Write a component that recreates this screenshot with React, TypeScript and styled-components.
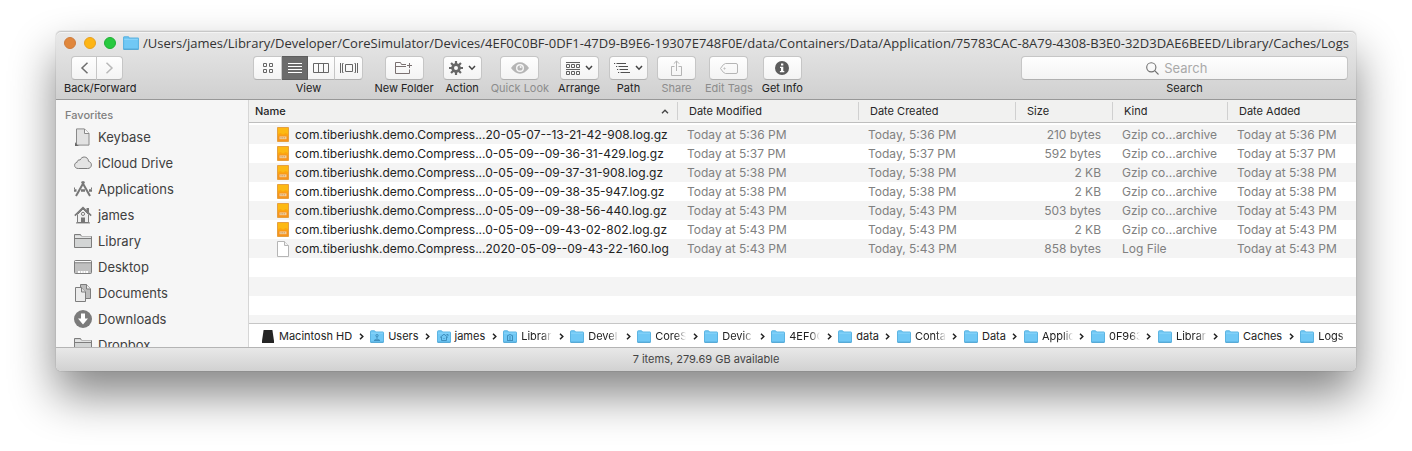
import React from "react";
import styled, { createGlobalStyle, css } from "styled-components";

const GlobalStyle = createGlobalStyle`
  *, *::before, *::after { box-sizing: border-box; }
  body { margin: 0; background: #fff; font-family: Inter, "Liberation Sans", sans-serif; font-size: 12px; color: #262626; }
  button, input { font: inherit; color: inherit; }
  svg { display: block; flex: none; }
`;

const Desktop = styled.div`
  display: flex;
  flex-direction: column;
  height: 100vh;
  padding: 31px 56px 80px;
  overflow: hidden;
`;

const Window = styled.main`
  display: flex;
  flex-direction: column;
  flex: 1;
  min-height: 0;
  border-radius: 5px;
  background: #fff;
  box-shadow: 0 0 1px rgba(0, 0, 0, 0.5), 0 24px 46px rgba(0, 0, 0, 0.48);
`;

const Chrome = styled.header`
  flex: none;
  border-radius: 5px 5px 0 0;
  border-bottom: 1px solid #989898;
  background: linear-gradient(#e9e9e9, #d0d0d0);
  box-shadow: inset 0 1px 0 #c8c8c8, inset 0 2px 0 #f4f4f4;
`;

const TitleBar = styled.div`
  display: flex;
  align-items: center;
  height: 24px;
  padding: 0 8px;
`;

const Lights = styled.div`
  display: flex;
  gap: 8px;
  margin-right: 7px;
`;

const Light = styled.button<{ $fill: string; $edge: string }>`
  width: 12px;
  height: 12px;
  padding: 0;
  border: 1px solid ${(p) => p.$edge};
  border-radius: 50%;
  background: ${(p) => p.$fill};
`;

const Title = styled.h1`
  margin: 0 0 0 4px;
  font: 400 13px/24px "Open Sans", Inter, sans-serif;
  color: #333;
  white-space: nowrap;
`;

const Toolbar = styled.div`
  display: flex;
  align-items: flex-start;
  gap: 9px;
  padding: 1px 8px 3px;
`;

const ToolItem = styled.div<{ $dim?: boolean }>`
  display: flex;
  flex-direction: column;
  align-items: center;
  flex: none;
  color: ${(p) => (p.$dim ? "#8c8c8c" : "#222")};
`;

const ToolLabel = styled.span`
  font-size: 11px;
  line-height: 16px;
  white-space: nowrap;
`;

const Segments = styled.div`
  display: flex;
`;

const NavItem = styled(ToolItem)`
  margin-right: 108px;
  ${Segments} { margin-right: 6px; }
`;

const ViewItem = styled(ToolItem)`
  margin-right: 2px;
`;

const face = css`
  border: 1px solid #c6c6c6;
  border-bottom-color: #b0b0b0;
  background: linear-gradient(#fefefe, #f3f3f3);
`;

const ToolButton = styled.button`
  ${face}
  display: flex;
  align-items: center;
  justify-content: center;
  gap: 5px;
  width: 39px;
  height: 24px;
  padding: 0;
  border-radius: 4px;
  color: inherit;
`;

const Segment = styled.button<{ $width: number; $active?: boolean }>`
  ${face}
  display: flex;
  align-items: center;
  justify-content: center;
  width: ${(p) => p.$width}px;
  height: 24px;
  padding: 0;
  &:not(:first-child) { border-left: 0; }
  &:first-child { border-radius: 4px 0 0 4px; }
  &:last-child { border-radius: 0 4px 4px 0; }
  ${(p) => p.$active && css`
    background: #6b6b6b;
    border-color: #5d5d5d;
  `}
`;

const SearchItem = styled(ToolItem)`
  flex: 0 1 327px;
  min-width: 120px;
  align-items: stretch;
  margin-left: auto;
  text-align: center;
`;

const SearchBox = styled.div`
  ${face}
  display: flex;
  align-items: center;
  gap: 5px;
  height: 24px;
  padding-left: 38%;
  border-radius: 4px;
`;

const SearchInput = styled.input`
  flex: 1;
  min-width: 0;
  height: 20px;
  padding: 0;
  border: 0;
  outline: 0;
  background: none;
  font-size: 13px;
  &::placeholder { color: #a9a9a9; opacity: 1; }
`;

const SearchLabel = styled.label`
  font-size: 11px;
  line-height: 16px;
`;

const Body = styled.div`
  display: flex;
  flex: 1;
  min-height: 0;
`;

const Sidebar = styled.nav`
  flex: 0 0 193px;
  overflow: hidden;
  padding: 8px 0 0 9px;
  border-right: 1px solid #d6d6d6;
  background: #f6f6f6;
`;

const SidebarHeading = styled.h2`
  margin: 0 0 2px;
  font-size: 11px;
  font-weight: 500;
  line-height: 14px;
  color: #808080;
`;

const SidebarList = styled.ul`
  margin: 0;
  padding: 0 0 0 9px;
  list-style: none;
`;

const SidebarLink = styled.a`
  display: flex;
  align-items: center;
  gap: 6px;
  height: 26px;
  font-size: 13px;
  color: #404040;
  text-decoration: none;
`;

const Content = styled.section`
  display: flex;
  flex-direction: column;
  flex: 1;
  min-width: 0;
`;

const ListPane = styled.div`
  flex: 1;
  min-height: 0;
  overflow: hidden;
  background: repeating-linear-gradient(#f4f4f4 0 19px, #fff 19px 38px) 0 25px no-repeat #fff;
`;

const FileTable = styled.table`
  width: 100%;
  table-layout: fixed;
  border-spacing: 0;
  tbody::before { content: ""; display: block; height: 2px; }
`;

const Col = styled.col<{ $width?: number }>`
  width: ${(p) => (p.$width ? `${p.$width}px` : "auto")};
`;

const HeadCell = styled.th<{ $primary?: boolean }>`
  height: 23px;
  padding: 0;
  border-bottom: 1px solid #bebebe;
  background: #f1f1f0;
  font-size: 11px;
  font-weight: ${(p) => (p.$primary ? 500 : 400)};
  text-align: left;
`;

const HeadInner = styled.div<{ $first?: boolean; $last?: boolean }>`
  display: flex;
  align-items: center;
  justify-content: space-between;
  height: 18px;
  padding: 0 8px 0 ${(p) => (p.$first ? 6 : 11)}px;
  border-right: ${(p) => (p.$last ? 0 : 1)}px solid #d0d0d0;
  white-space: nowrap;
`;

const Cell = styled.td<{ $right?: boolean }>`
  height: 19px;
  padding: 0 12px 0 9px;
  color: #808080;
  line-height: 19px;
  text-align: ${(p) => (p.$right ? "right" : "left")};
  white-space: nowrap;
`;

const NameCell = styled(Cell)`
  padding: 0 0 0 28px;
  color: #222;
`;

const FileName = styled.div`
  display: flex;
  align-items: center;
  gap: 6px;
`;

const PathBar = styled.nav`
  display: flex;
  align-items: center;
  flex: none;
  height: 24px;
  padding: 1px 13px 0;
  border-top: 1px solid #c6c6c6;
  overflow: hidden;
`;

const Crumb = styled.a`
  display: flex;
  align-items: center;
  gap: 4px;
  flex: none;
  font-size: 11px;
  color: #222;
  text-decoration: none;
`;

const CrumbText = styled.span<{ $clipped?: boolean }>`
  line-height: 16px;
  white-space: nowrap;
  ${(p) => p.$clipped && css`
    width: 31px;
    overflow: hidden;
    mask-image: linear-gradient(90deg, #000 68%, transparent);
  `}
`;

const CrumbGap = styled.span`
  display: flex;
  flex: none;
  justify-content: center;
  width: 18px;
`;

const StatusBar = styled.footer`
  flex: none;
  height: 24px;
  border-top: 1px solid #b4b4b4;
  border-radius: 0 0 5px 5px;
  background: linear-gradient(#e8e8e8, #d1d1d1);
  font-size: 11px;
  line-height: 23px;
  text-align: center;
  color: #444;
`;

const Folder = ({ w = 14, mark }: { w?: number; mark?: string }) => (
  <svg width={w} height={w === 14 ? 13 : 14} viewBox="0 0 14 13" preserveAspectRatio="none">
    <path d="M.5 12V1.5Q.5.8 1.2.8H4.6L5.6 2H13Q13.5 2 13.5 2.6V12Z" fill="#70c8f5" stroke="#5cb4e2" />
    <path d="M1 3.2H13" stroke="#89d4fa" />
    <path d="M.5 12.4H13.5" stroke="#4fa5d3" />
    {mark && <path d={mark} fill="none" stroke="#3f8fbd" />}
  </svg>
);

const Caret = () => (
  <svg width="8" height="6" viewBox="0 0 8 6"><path d="M1 1L4 4.2L7 1" fill="none" stroke="#444" strokeWidth="1.5" /></svg>
);

const line = { fill: "none", stroke: "#7d7d7d", strokeWidth: 1 } as const;

const FolderGray = () => (
  <svg width="18" height="18" viewBox="0 0 18 18">
    <path d="M.5 15.5V2.5H6.5L7.5 4.5H17.5V15.5Z" fill="#d3d5d5" stroke="#7d7d7d" />
    <path d="M1 5H17" stroke="#f2f2f2" /><path d="M1 6.5H17" stroke="#7d7d7d" />
  </svg>
);

const sideIcons: Record<string, React.ReactNode> = {
  file: (
    <svg width="18" height="18" viewBox="0 0 18 18">
      <path d="M2.5 .9H10.5L15 5.5V17.1H2.5Z" fill="#e2e2e2" stroke="#8a8a8a" />
      <path d="M10.5 1V5.5H15" fill="#fafafa" stroke="#8a8a8a" />
      <path d="M1 14V18H5.5C3.5 17.4 2.2 16.2 1 14Z" fill="#666" />
    </svg>
  ),
  cloud: (
    <svg width="18" height="18" viewBox="0 0 18 18">
      <path d="M4.3 14.5C2 14.5.6 13.2.6 11.3C.6 9.6 1.7 8.5 3.1 8.3C3.1 6.6 4.6 5.5 6.1 6C7 4 8.5 3 10.2 3C12.6 3 14.4 4.8 14.5 7.3C16.3 7.8 17.4 9.1 17.4 10.9C17.4 13 15.8 14.5 13.7 14.5Z" fill="#e4e4e4" stroke="#7d7d7d" />
    </svg>
  ),
  apps: (
    <svg width="18" height="18" viewBox="0 0 18 18" fill="none" stroke="#777">
      <path d="M10.2 1.5L2 16" strokeWidth="2" /><path d="M7.8 1.5L16 16" strokeWidth="2" />
      <path d="M0 10.5H2.5M7 10.5H11M15 10.5H18" strokeWidth="2.4" />
      <path d="M.5 7.5V9M17.5 7.5V9" />
    </svg>
  ),
  home: (
    <svg width="18" height="18" viewBox="0 0 18 18">
      <path d="M12.5 2H15V6H12.5Z" fill="#777" />
      <path d="M3.5 8.5L9 3L14.5 8.5V16.5H3.5Z" fill="#efefef" stroke="#7d7d7d" />
      <path d="M.8 9.6L9 1.6L17.2 9.6" fill="none" stroke="#777" strokeWidth="1.5" />
      <path d="M7 11.5H11V17H7Z" fill="#777" /><circle cx="9" cy="7.9" r="1.6" {...line} /><path d="M2 16.9H16" stroke="#777" />
    </svg>
  ),
  folder: <FolderGray />,
  desktop: (
    <svg width="18" height="18" viewBox="0 0 18 18">
      <rect x=".5" y="2.5" width="17" height="13" rx="1" fill="#c0c0c0" stroke="#7d7d7d" />
      <path d="M1 3.5H17" stroke="#fafafa" /><path d="M1 4.8H17" stroke="#8c8c8c" />
      <path d="M4 14H14" stroke="#fff" strokeWidth="2" strokeDasharray="2 .7" />
    </svg>
  ),
  documents: (
    <svg width="18" height="18" viewBox="0 0 18 18">
      <path d="M6.5.5H12.5L16.5 5V14.5H6.5Z" fill="#bcbcbc" stroke="#7d7d7d" />
      <path d="M12.5.5V5H16.5" fill="#eee" stroke="#7d7d7d" />
      <path d="M1.5 3.5H7.5L11.5 8V17.5H1.5Z" fill="#ececec" stroke="#7d7d7d" />
      <path d="M7.5 3.5V8H11.5" fill="#ddd" stroke="#7d7d7d" />
    </svg>
  ),
  downloads: (
    <svg width="18" height="18" viewBox="0 0 18 18">
      <circle cx="9" cy="9" r="9" fill="#7b7b7b" />
      <path d="M7 3.5H11V8.5H14L9 14.6L4 8.5H7Z" fill="#fff" />
    </svg>
  ),
};

const places = [
  ["Keybase", "file"], ["iCloud Drive", "cloud"], ["Applications", "apps"], ["james", "home"], ["Library", "folder"],
  ["Desktop", "desktop"], ["Documents", "documents"], ["Downloads", "downloads"], ["Dropbox", "folder"],
];

const prefix = "com.tiberiushk.demo.Compress...";
const files = [
  ["20-05-07--13-21-42-908.log.gz", "5:36 PM", "210 bytes"],
  ["0-05-09--09-36-31-429.log.gz", "5:37 PM", "592 bytes"],
  ["0-05-09--09-37-31-908.log.gz", "5:38 PM", "2 KB"],
  ["0-05-09--09-38-35-947.log.gz", "5:38 PM", "2 KB"],
  ["0-05-09--09-38-56-440.log.gz", "5:43 PM", "503 bytes"],
  ["0-05-09--09-43-02-802.log.gz", "5:43 PM", "2 KB"],
  ["2020-05-09--09-43-22-160.log", "5:43 PM", "858 bytes"],
];

const GzIcon = () => (
  <svg width="12" height="15" viewBox="0 0 12 15">
    <path d="M.5.5H11.5V14.5H.5Z" fill="#fca510" stroke="#e6a040" />
    <path d="M1 1H11V7L8.5 6L6 7.5L3.5 6L1 7Z" fill="#fdb913" />
    <path d="M1 9.5L3 8.5H9L11 9.5V14H1Z" fill="#f7941d" />
    <path d="M2.5 10.8H9.5" stroke="#f3cd96" strokeWidth="2.8" /><path d="M3.5 10.8H8.5" stroke="#c4955c" strokeDasharray="1 .7" />
  </svg>
);

const PageIcon = () => (
  <svg width="12" height="16" viewBox="0 0 12 16">
    <path d="M.5.5H7.5L11.5 4.5V15.5H.5Z" fill="#fff" stroke="#b5b5b5" />
    <path d="M7.5.5V4.5H11.5" fill="#f1f1f1" stroke="#b5b5b5" />
  </svg>
);

const person = "M7 4.5A1.1 1.1 0 1 1 7 6.8A1.1 1.1 0 1 1 7 4.5M7 7V8.5M4 10.5Q7 7.5 10 10.5Z";
const house = "M3 7.5L7 4.2L11 7.5M4.5 7V10.5H9.5V7M9.5 4.5H11V6M6.5 8.5H7.5";
const columns = "M4 6L7 4.5L10 6M4.5 6V10.5M7 6V10.5M9.5 6V10.5M4 10.5H10";

const crumbs: { text: string; clipped?: boolean; mark?: string }[] = [
  { text: "Users", mark: person }, { text: "james", mark: house }, { text: "Librar", clipped: true, mark: columns },
  { text: "Devel", clipped: true }, { text: "CoreS", clipped: true }, { text: "Devic", clipped: true },
  { text: "4EF0C", clipped: true }, { text: "data" }, { text: "Conta", clipped: true }, { text: "Data" },
  { text: "Applic", clipped: true }, { text: "0F963", clipped: true }, { text: "Librar", clipped: true },
  { text: "Caches" }, { text: "Logs", clipped: true },
];

const Arrow = ({ d, color }: { d: string; color: string }) => (
  <svg width="9" height="12" viewBox="0 0 9 12"><path d={d} fill="none" stroke={color} strokeWidth="1.5" /></svg>
);

export default function App() {
  return (
    <Desktop>
      <GlobalStyle />
      <Window>
        <Chrome>
          <TitleBar>
            <Lights>
              <Light $fill="#e0873c" $edge="#cf7c3c" aria-label="Close" />
              <Light $fill="#fdb515" $edge="#e8a020" aria-label="Minimize" />
              <Light $fill="#27c93f" $edge="#1fb034" aria-label="Zoom" />
            </Lights>
            <Folder w={16} />
            <Title>/Users/james/Library/Developer/CoreSimulator/Devices/4EF0C0BF-0DF1-47D9-B9E6-19307E748F0E/data/Containers/Data/Application/75783CAC-8A79-4308-B3E0-32D3DAE6BEED/Library/Caches/Logs</Title>
          </TitleBar>
          <Toolbar>
            <NavItem>
              <Segments>
                <Segment $width={26} aria-label="Back"><Arrow d="M7.5.7L2 6L7.5 11.3" color="#6e6e6e" /></Segment>
                <Segment $width={26} aria-label="Forward"><Arrow d="M1.5.7L7 6L1.5 11.3" color="#b8b8b8" /></Segment>
              </Segments>
              <ToolLabel>Back/Forward</ToolLabel>
            </NavItem>
            <ViewItem>
              <Segments>
                <Segment $width={29} aria-label="Icons">
                  <svg width="12" height="11" viewBox="0 0 12 11" {...line} stroke="#666"><path d="M1.5.5H4.5V3.5H1.5ZM7.5.5H10.5V3.5H7.5ZM1.5 6.5H4.5V9.5H1.5ZM7.5 6.5H10.5V9.5H7.5Z" /></svg>
                </Segment>
                <Segment $width={26} $active aria-label="List">
                  <svg width="14" height="11" viewBox="0 0 14 11"><path d="M0 .5H14M0 3.5H14M0 6.5H14M0 9.5H14" stroke="#fff" /></svg>
                </Segment>
                <Segment $width={27} aria-label="Columns">
                  <svg width="16" height="11" viewBox="0 0 16 11" {...line} stroke="#666"><path d="M.5.5H15.5V9.5H.5ZM5.5.5V9.5M10.5.5V9.5" /></svg>
                </Segment>
                <Segment $width={28} aria-label="Gallery">
                  <svg width="18" height="11" viewBox="0 0 18 11" {...line} stroke="#666"><path d="M5.5 1.5H12.5V8.5H5.5ZM.5 0V10M3.5.5H2.5V9.5H3.5M17.5 0V10M14.5.5H15.5V9.5H14.5" /></svg>
                </Segment>
              </Segments>
              <ToolLabel>View</ToolLabel>
            </ViewItem>
            <ToolItem>
              <ToolButton aria-label="New Folder">
                <svg width="18" height="13" viewBox="0 0 18 13" fill="none" stroke="#7a7070"><path d="M11 2.5H6.5L5.5.5H.5V11.5H14.5V7.5M.5 4.5H11M14.5 1V6M12 3.5H17" /></svg>
              </ToolButton>
              <ToolLabel>New Folder</ToolLabel>
            </ToolItem>
            <ToolItem>
              <ToolButton aria-label="Action" aria-haspopup="menu">
                <svg width="14" height="14" viewBox="0 0 14 14">
                  <path d="M7 0V14M0 7H14M2.05 2.05L11.95 11.95M11.95 2.05L2.05 11.95" stroke="#666" strokeWidth="2.2" />
                  <circle cx="7" cy="7" r="3.4" fill="#fafafa" stroke="#666" strokeWidth="2.8" />
                </svg>
                <Caret />
              </ToolButton>
              <ToolLabel>Action</ToolLabel>
            </ToolItem>
            <ToolItem $dim>
              <ToolButton aria-label="Quick Look" disabled>
                <svg width="18" height="12" viewBox="0 0 18 12">
                  <path d="M0 6Q4 .3 9 .3T18 6Q14 11.7 9 11.7T0 6Z" fill="#b5b5b5" />
                  <circle cx="9" cy="6" r="4" fill="#f6f6f6" /><circle cx="9" cy="6" r="2.6" fill="#b5b5b5" /><circle cx="9.6" cy="5" r="1" fill="#f6f6f6" />
                </svg>
              </ToolButton>
              <ToolLabel>Quick Look</ToolLabel>
            </ToolItem>
            <ToolItem>
              <ToolButton aria-label="Arrange" aria-haspopup="menu">
                <svg width="14" height="13" viewBox="0 0 14 13" fill="none" stroke="#606060"><path d="M0 .5H14M0 7.5H14M.5 2.5H3.5V5.5H.5ZM5.5 2.5H8.5V5.5H5.5ZM10.5 2.5H13.5V5.5H10.5ZM.5 9.5H3.5V12.5H.5ZM5.5 9.5H8.5V12.5H5.5ZM10.5 9.5H13.5V12.5H10.5Z" /></svg>
                <Caret />
              </ToolButton>
              <ToolLabel>Arrange</ToolLabel>
            </ToolItem>
            <ToolItem>
              <ToolButton aria-label="Path" aria-haspopup="menu">
                <svg width="16" height="11" viewBox="0 0 16 11" stroke="#505050"><path d="M0 .5H1.2M2.5.5H12M2 3.5H3.2M4.5 3.5H14M3 6.5H4.2M5.5 6.5H14M4 9.5H5.2M6.5 9.5H16" /></svg>
                <Caret />
              </ToolButton>
              <ToolLabel>Path</ToolLabel>
            </ToolItem>
            <ToolItem $dim>
              <ToolButton aria-label="Share" disabled>
                <svg width="11" height="16" viewBox="0 0 11 16" fill="none" stroke="#b5b5b5"><path d="M3.5 6.5H.5V15.5H10.5V6.5H7.5M5.5 11V1M2.8 3.7L5.5 1L8.2 3.7" /></svg>
              </ToolButton>
              <ToolLabel>Share</ToolLabel>
            </ToolItem>
            <ToolItem $dim>
              <ToolButton aria-label="Edit Tags" disabled>
                <svg width="18" height="11" viewBox="0 0 18 11" fill="none" stroke="#b5b5b5"><path d="M5.5.5H16Q17.5.5 17.5 2V9Q17.5 10.5 16 10.5H5.5Q3.5 10.5.5 5.5Q3.5.5 5.5.5Z" /><circle cx="4.5" cy="5.5" r=".6" /></svg>
              </ToolButton>
              <ToolLabel>Edit Tags</ToolLabel>
            </ToolItem>
            <ToolItem>
              <ToolButton aria-label="Get Info">
                <svg width="14" height="14" viewBox="0 0 14 14"><circle cx="7" cy="7" r="7" fill="#5c5c5c" /><path d="M6 2.5H8.3V4.6H6ZM5 5.8H8.3V10H9.3V11.2H4.9V10H6V7H5Z" fill="#fff" /></svg>
              </ToolButton>
              <ToolLabel>Get Info</ToolLabel>
            </ToolItem>
            <SearchItem>
              <SearchBox>
                <svg width="13" height="13" viewBox="0 0 13 13" fill="none" stroke="#707070" strokeWidth="1.1"><circle cx="5.3" cy="5.3" r="4.6" /><path d="M8.7 8.7L12.5 12.5" /></svg>
                <SearchInput id="search" type="text" placeholder="Search" />
              </SearchBox>
              <SearchLabel htmlFor="search">Search</SearchLabel>
            </SearchItem>
          </Toolbar>
        </Chrome>

        <Body>
          <Sidebar>
            <SidebarHeading>Favorites</SidebarHeading>
            <SidebarList>
              {places.map(([name, icon]) => (
                <li key={name}><SidebarLink href="#">{sideIcons[icon]}{name}</SidebarLink></li>
              ))}
            </SidebarList>
          </Sidebar>
          <Content>
            <ListPane>
              <FileTable>
                <colgroup>
                  <Col /><Col $width={181} /><Col $width={157} /><Col $width={97} /><Col $width={115} /><Col $width={128} />
                </colgroup>
                <thead>
                  <tr>
                    <HeadCell $primary>
                      <HeadInner $first>
                        Name
                        <svg width="8" height="5" viewBox="0 0 8 5"><path d="M1 4.3L4 1.2L7 4.3" fill="none" stroke="#444" strokeWidth="1.3" /></svg>
                      </HeadInner>
                    </HeadCell>
                    {["Date Modified", "Date Created", "Size", "Kind"].map((h) => (
                      <HeadCell key={h}><HeadInner>{h}</HeadInner></HeadCell>
                    ))}
                    <HeadCell><HeadInner $last>Date Added</HeadInner></HeadCell>
                  </tr>
                </thead>
                <tbody>
                  {files.map(([name, time, size]) => (
                    <tr key={name}>
                      <NameCell><FileName>{name.endsWith(".gz") ? <GzIcon /> : <PageIcon />}{prefix + name}</FileName></NameCell>
                      <Cell>{`Today at ${time}`}</Cell>
                      <Cell>{`Today, ${time}`}</Cell>
                      <Cell $right>{size}</Cell>
                      <Cell>{name.endsWith(".gz") ? "Gzip co...archive" : "Log File"}</Cell>
                      <Cell>{`Today at ${time}`}</Cell>
                    </tr>
                  ))}
                </tbody>
              </FileTable>
            </ListPane>
            <PathBar aria-label="Path">
              <Crumb href="#">
                <svg width="13" height="13" viewBox="0 0 13 13"><path d="M1.6 0H10.4L12 11V13H0V11Z" fill="#242424" /></svg>
                <CrumbText>Macintosh HD</CrumbText>
              </Crumb>
              {crumbs.map((c, i) => (
                <React.Fragment key={i}>
                  <CrumbGap>
                    <svg width="5" height="7" viewBox="0 0 5 7"><path d="M1 .8L3.8 3.5L1 6.2" fill="none" stroke="#222" strokeWidth="1.5" /></svg>
                  </CrumbGap>
                  <Crumb href="#"><Folder mark={c.mark} /><CrumbText $clipped={c.clipped}>{c.text}</CrumbText></Crumb>
                </React.Fragment>
              ))}
            </PathBar>
          </Content>
        </Body>
        <StatusBar>7 items, 279.69 GB available</StatusBar>
      </Window>
    </Desktop>
  );
}
